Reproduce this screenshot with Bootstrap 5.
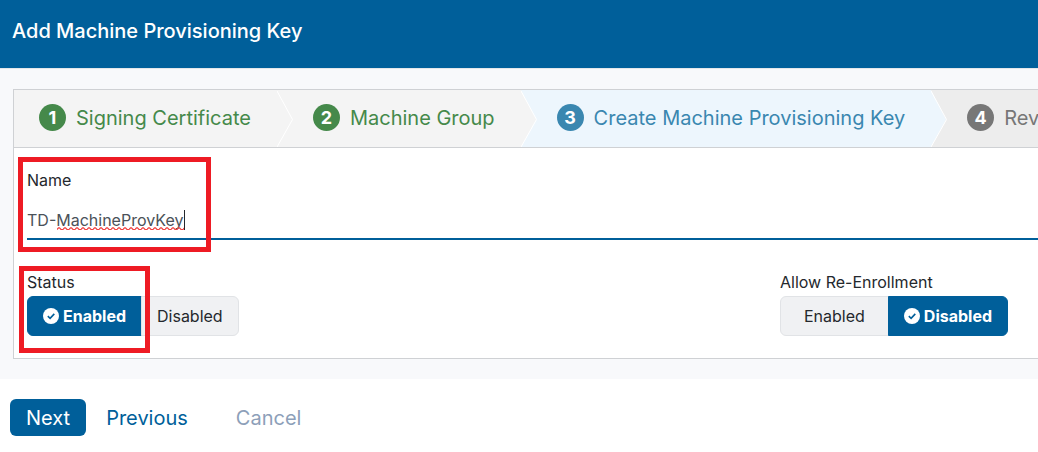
<!DOCTYPE html>
<html lang="en">
<head>
<meta charset="utf-8">
<meta name="viewport" content="width=device-width, initial-scale=1">
<title>Add Machine Provisioning Key</title>
<link rel="stylesheet" href="https://cdn.jsdelivr.net/npm/bootstrap@5.3.0/dist/css/bootstrap.min.css">
<style>
  :root { --brand: #005f9a; --line: #cfd1d4; --page: #f8f9fb; }
  body { font-family: Inter, "Liberation Sans", sans-serif; font-size: 16px; color: #24282d; background: #fff; }
  .titlebar { background: var(--brand); padding: 16px 12px 22px; }
  .titlebar h1 { font-size: 20px; line-height: 30px; font-weight: 500; }
  .stage { background: var(--page); border-top: 1px solid #e3e6ea; padding: 20px 0 20px 13px; }
  .panel { background: #fff; border: 1px solid var(--line); border-right: 0; }
  .wizard { background: #ededed; border-bottom: 1px solid var(--line); overflow: hidden; }
  .step { height: 57px; flex: none; gap: 10px; padding: 0 26px 2px 36px; font-size: 20px; line-height: 28px; font-weight: 400; background: #f4f4f4; color: #45894a; }
  .step:first-child { padding-left: 25px; }
  .step-no { width: 27px; height: 27px; border-radius: 50%; background: #45894a; color: #fff; font-size: 18px; font-weight: 700; }
  .step.current { background: #edf6fd; color: #3a87b0; }
  .step.current .step-no { background: #3a87b0; }
  .step.pending { background: #ededed; color: #777; }
  .step.pending .step-no { background: #777; }
  .arrow { position: absolute; left: 100%; top: 0; z-index: 1; width: 16px; height: 57px; fill: #f4f4f4; }
  .current .arrow { fill: #edf6fd; }
  .form-area { padding: 20px 0 22px 13px; }
  .form-area label, .form-area legend { font-size: 16px; line-height: 24px; font-weight: 400; margin: 0; }
  .name-input { width: 100%; height: 40px; border: 0; border-bottom: 2px solid var(--brand); border-radius: 0; padding: 2px 0 0; margin-top: 8px; color: #4b5259; font-weight: 400; background: transparent; outline: 0; }
  .options { display: grid; grid-template-columns: 3fr 1fr; margin-top: 30px; padding-right: 7px; }
  .toggle { margin-top: 2px; }
  .toggle .btn { height: 40px; flex: none; border: 1px solid #e1e3e6; background: #f0f1f3; color: #24282d; font-size: 16px; line-height: 24px; font-weight: 400; padding: 7px 15px; }
  .toggle .btn.wide { padding: 7px 23px; }
  .toggle .btn.on { background: var(--brand); border-color: var(--brand); color: #fff; font-weight: 700; gap: 4px; }
  .actions { padding: 20px 10px 16px; }
  .actions .btn { font-size: 20px; line-height: 28px; font-weight: 400; border: 0; padding: 4px 16px; border-radius: 6px; }
  .actions .next { background: var(--brand); color: #fff; height: 37px; }
  .actions .prev { color: var(--brand); }
  .actions .cancel { color: #8d9fb9; margin-left: 16px; }
  .callout { position: absolute; border: 5px solid #ee1b24; pointer-events: none; z-index: 5; }
  .callout.name { left: -9px; top: -11px; width: 193px; height: 95px; }
  .callout.status { left: -8px; top: -4px; width: 131px; height: 87px; }
  .spell { position: absolute; left: 30px; top: 42px; width: 129px; height: 20px; pointer-events: none; }
</style>
</head>
<body>
<header class="titlebar text-white"><h1 class="m-0">Add Machine Provisioning Key</h1></header>

<main class="stage">
  <section class="panel">
    <ol class="wizard list-unstyled d-flex m-0">
      <li class="step position-relative d-flex align-items-center"><span class="step-no d-flex align-items-center justify-content-center">1</span><span>Signing Certificate</span>
        <svg class="arrow" viewBox="0 0 16 57" aria-hidden="true"><path d="M0 0 15 29.500 0 57z"/><path d="M0 1 15.500 29.500 0 57" fill="none" stroke="#fff"/></svg></li>
      <li class="step position-relative d-flex align-items-center"><span class="step-no d-flex align-items-center justify-content-center">2</span><span>Machine Group</span>
        <svg class="arrow" viewBox="0 0 16 57" aria-hidden="true"><path d="M0 0 15 29.500 0 57z"/><path d="M0 1 15.500 29.500 0 57" fill="none" stroke="#fff"/></svg></li>
      <li class="step current position-relative d-flex align-items-center" aria-current="step"><span class="step-no d-flex align-items-center justify-content-center">3</span><span>Create Machine Provisioning Key</span>
        <svg class="arrow" viewBox="0 0 16 57" aria-hidden="true"><path d="M0 0 15 29.500 0 57z"/><path d="M0 1 15.500 29.500 0 57" fill="none" stroke="#fff"/></svg></li>
      <li class="step pending position-relative d-flex align-items-center"><span class="step-no d-flex align-items-center justify-content-center">4</span><span>Review</span></li>
    </ol>

    <form class="form-area">
      <div class="position-relative">
        <label class="d-block" for="keyName">Name</label>
        <input class="name-input d-block" id="keyName" type="text" value="TD-MachineProvKey" spellcheck="false">
        <svg class="spell" viewBox="0 0 129 20" aria-hidden="true">
          <defs><pattern id="wave" width="6" height="3" patternUnits="userSpaceOnUse" y="17"><path d="M0 2.500 1.500 .8h1L4 2.500h2" fill="none" stroke="#f04040" stroke-width="1.200"/></pattern></defs>
          <rect y="17" width="127" height="3" fill="url(#wave)"/><path d="M127.500 0v20" stroke="#24282d"/>
        </svg>
        <span class="callout name"></span>
      </div>
      <div class="options">
        <fieldset class="position-relative">
          <legend>Status</legend>
          <div class="toggle btn-group">
            <button type="button" class="btn on d-flex align-items-center" aria-pressed="true"><svg width="16" height="16" viewBox="0 0 16 16" aria-hidden="true"><circle cx="8" cy="8" r="8" fill="#fff"/><path d="m4.800 8.200 2.300 2.100 4.200-4.400" fill="none" stroke="#005f9a" stroke-width="1.600"/></svg>Enabled</button>
            <button type="button" class="btn" aria-pressed="false">Disabled</button>
          </div>
          <span class="callout status"></span>
        </fieldset>
        <fieldset>
          <legend class="text-nowrap">Allow Re-Enrollment</legend>
          <div class="toggle btn-group">
            <button type="button" class="btn wide" aria-pressed="false">Enabled</button>
            <button type="button" class="btn on d-flex align-items-center" aria-pressed="true"><svg width="16" height="16" viewBox="0 0 16 16" aria-hidden="true"><circle cx="8" cy="8" r="8" fill="#fff"/><path d="m4.800 8.200 2.300 2.100 4.200-4.400" fill="none" stroke="#005f9a" stroke-width="1.600"/></svg>Disabled</button>
          </div>
        </fieldset>
      </div>
    </form>
  </section>
</main>

<footer class="actions d-flex align-items-center">
  <button type="button" class="btn next">Next</button>
  <button type="button" class="btn prev ms-1">Previous</button>
  <button type="button" class="btn cancel">Cancel</button>
</footer>
<script src="https://cdn.jsdelivr.net/npm/bootstrap@5.3.0/dist/js/bootstrap.bundle.min.js"></script>
</body>
</html>
